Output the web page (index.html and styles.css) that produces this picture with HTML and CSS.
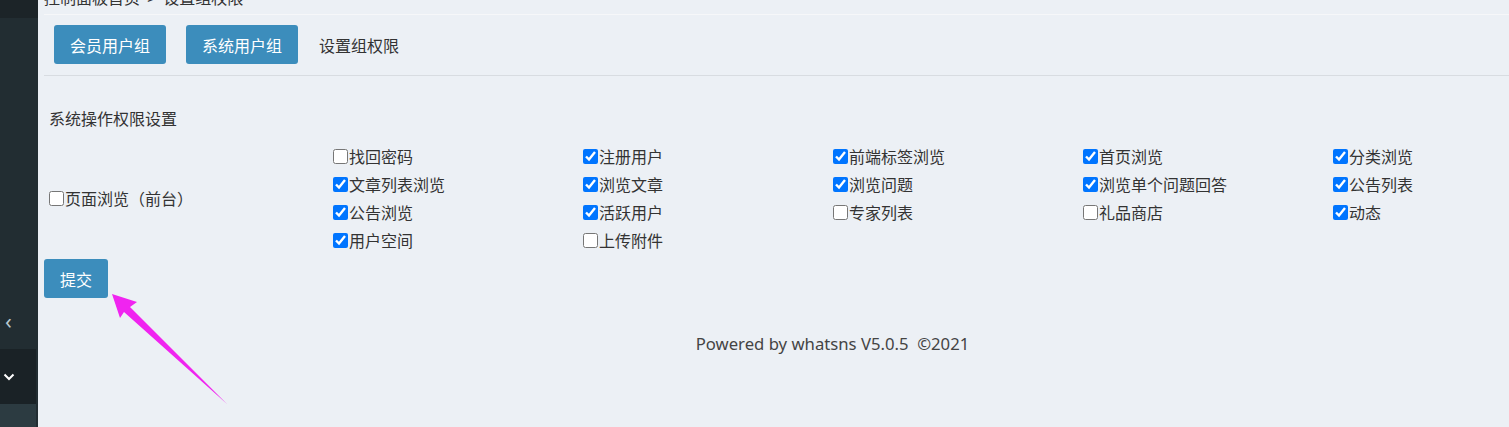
FILE: index.html
```html
<!DOCTYPE html>
<html>

<head>
    <meta charset="utf-8">
    <link rel="stylesheet" href="styles.css">
</head>

<body>
    <aside class="sidebar">
        <div class="sb-top"></div>
        <div class="sb-menu">
            <div class="sb-toggle">&lsaquo;</div>
        </div>
        <div class="sb-active">
            <svg width="12" height="8" viewBox="0 0 12 8"><path d="M1.5 1.5 L6 6 L10.5 1.5" fill="none" stroke="#fff" stroke-width="2"/></svg>
        </div>
        <div class="sb-sub"></div>
    </aside>

    <div class="main">
        <div class="crumb">
            <div class="crumb-text">控制面板首页 &nbsp;&gt;&nbsp; 设置组权限</div>
        </div>

        <div class="tabs">
            <a class="btn">会员用户组</a>
            <a class="btn">系统用户组</a>
            <span class="tab-text">设置组权限</span>
        </div>

        <form class="perm-form">
            <div class="perm-title">系统操作权限设置</div>
            <div class="perm">
                <div class="perm-group">
                    <label><input type="checkbox">页面浏览（前台）</label>
                </div>
                <div class="perm-items">
                    <label><input type="checkbox">找回密码</label>
                    <label><input type="checkbox" checked>注册用户</label>
                    <label><input type="checkbox" checked>前端标签浏览</label>
                    <label><input type="checkbox" checked>首页浏览</label>
                    <label><input type="checkbox" checked>分类浏览</label>
                    <label><input type="checkbox" checked>文章列表浏览</label>
                    <label><input type="checkbox" checked>浏览文章</label>
                    <label><input type="checkbox" checked>浏览问题</label>
                    <label><input type="checkbox" checked>浏览单个问题回答</label>
                    <label><input type="checkbox" checked>公告列表</label>
                    <label><input type="checkbox" checked>公告浏览</label>
                    <label><input type="checkbox" checked>活跃用户</label>
                    <label><input type="checkbox">专家列表</label>
                    <label><input type="checkbox">礼品商店</label>
                    <label><input type="checkbox" checked>动态</label>
                    <label><input type="checkbox" checked>用户空间</label>
                    <label><input type="checkbox">上传附件</label>
                </div>
            </div>
            <button type="button" class="btn submit">提交</button>
        </form>

        <div class="footer">Powered by whatsns V5.0.5 &nbsp;©2021</div>

        <!-- annotation arrow -->
        <svg class="arrow" width="1509" height="427" viewBox="0 0 1509 427">
            <polygon points="112,294 137,302 130,307 227,404 124,312 120,318" fill="#f024f0"/>
        </svg>
    </div>
</body>

</html>
```

FILE: styles.css
```css
html,
body {
    margin: 0;
    height: 427px;
    overflow: hidden;
}

body {
    display: flex;
    font-family: "Noto Sans", "Noto Sans CJK SC", sans-serif;
    font-size: 16px;
    color: #333;
    background: #ecf0f5;
}

/* sidebar */
.sidebar {
    width: 38px;
    flex: none;
    display: flex;
    flex-direction: column;
    background: #222d32;
}

.sb-top {
    height: 18px;
    background: #1c2428;
}

.sb-menu {
    height: 331px;
    display: flex;
    flex-direction: column;
    justify-content: flex-end;
}

.sb-toggle {
    height: 58px;
    width: 36px;
    display: flex;
    align-items: center;
    padding-left: 5px;
    box-sizing: border-box;
    color: #b8c7ce;
    font-size: 22px;
    line-height: 1;
}

.sb-active {
    width: 36px;
    height: 55px;
    background: #1a2226;
    display: flex;
    align-items: center;
    padding-left: 3px;
    box-sizing: border-box;
}

.sb-sub {
    width: 36px;
    flex: 1;
    background: #2c3b41;
}

/* main */
.main {
    flex: 1;
    min-width: 0;
    padding-left: 6px;
    position: relative;
}

.crumb {
    display: flow-root;
    height: 14px;
    border-bottom: 1px solid #f6f7f9;
}

.crumb-text {
    margin-top: -11px;
    line-height: 16px;
    white-space: nowrap;
    font-family: "Noto Sans CJK SC", sans-serif;
}

.tabs {
    display: flex;
    align-items: center;
    gap: 20px;
    padding: 10px 0 11px 10px;
    border-bottom: 1px solid #d8dce1;
}

.btn {
    display: inline-flex;
    align-items: center;
    height: 39px;
    padding: 0 16px;
    border: none;
    border-radius: 3px;
    background: #3c8dbc;
    color: #fff;
    font-family: "Noto Sans CJK SC", sans-serif;
    font-size: 16px;
}

.tab-text {
    margin-left: 1px;
    font-family: "Noto Sans CJK SC", sans-serif;
}

.perm-form {
    margin: 0;
}

.perm-title {
    padding: 31px 0 0 5px;
    line-height: 22px;
    font-family: "Noto Sans CJK SC", sans-serif;
}

.perm {
    display: flex;
    align-items: center;
    margin-top: 13px;
    padding-left: 5px;
    font-family: "Noto Sans CJK SC", sans-serif;
}

.perm-group {
    width: 284px;
    flex: none;
}

.perm-items {
    flex: none;
    display: grid;
    grid-template-columns: repeat(5, 250px);
    grid-auto-rows: 28px;
}

.perm label {
    display: flex;
    align-items: center;
    line-height: 28px;
}

.perm input {
    width: 15px;
    height: 15px;
    margin: 0 1px 0 0;
}

.submit {
    margin-top: 5px;
}

.footer {
    margin-top: 35px;
    padding-left: 112px;
    line-height: 22px;
    text-align: center;
    font-size: 16.7px;
    color: #444;
}

.arrow {
    position: absolute;
    left: -38px;
    top: 0;
    pointer-events: none;
}
```
